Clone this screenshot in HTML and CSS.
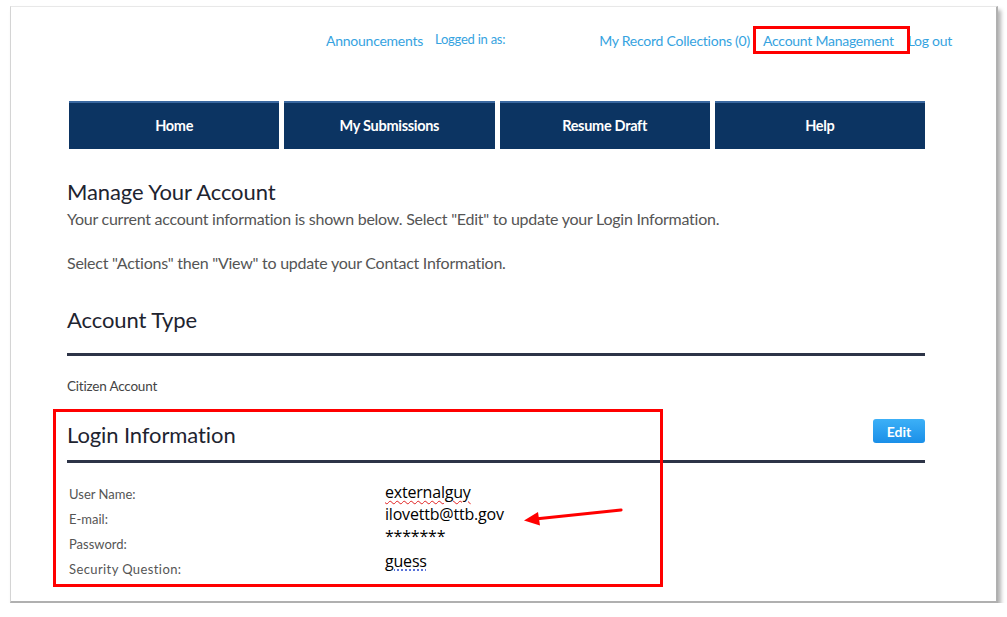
FILE: index.html
```html
<!DOCTYPE html>
<html lang="en">
<head>
<meta charset="UTF-8">
<meta name="viewport" content="width=device-width, initial-scale=1.0">
<title>Manage Your Account</title>
<link rel="stylesheet" href="styles.css">
</head>
<body>

<div class="frame">
    <div class="topbar">
        <a href="#" class="toplink announce">Announcements</a>
        <span class="toplink logged">Logged in as:</span>
        <a href="#" class="toplink records">My Record Collections (0)</a>
        <a href="#" class="toplink manage">Account Management</a>
        <a href="#" class="toplink logout">Log out</a>
        <div class="mark mark-top"></div>
    </div>

    <div class="content">
        <div class="nav">
            <a href="#">Home</a>
            <a href="#">My Submissions</a>
            <a href="#">Resume Draft</a>
            <a href="#">Help</a>
        </div>

        <h1 class="title">Manage Your Account</h1>
        <p class="intro">Your current account information is shown below. Select "Edit" to update your Login Information.</p>
        <p class="intro second">Select "Actions" then "View" to update your Contact Information.</p>

        <h2 class="section">Account Type</h2>
        <div class="rule"></div>
        <div class="small">Citizen Account</div>

        <div class="login">
            <div class="section-row">
                <h2 class="section">Login Information</h2>
                <button class="edit">Edit</button>
            </div>
            <div class="rule rule-login"></div>
            <div class="details">
                <div class="labels">
                    <div>User Name:</div>
                    <div>E-mail:</div>
                    <div>Password:</div>
                    <div>Security Question:</div>
                </div>
                <div class="values">
                    <div><span class="spell">externalguy</span></div>
                    <div>ilovettb@ttb.gov</div>
                    <div>*******</div>
                    <div class="last"><span class="grammar">guess</span></div>
                </div>
            </div>
            <div class="mark mark-login"></div>
            <svg class="arrow" width="110" height="24" viewBox="0 0 110 24">
                <line x1="100" y1="4" x2="14" y2="13" stroke="#ff0000" stroke-width="3.2" stroke-linecap="round"/>
                <polygon points="3,14.5 17,6 19,19.5" fill="#ff0000"/>
            </svg>
        </div>
    </div>
</div>

</body>
</html>
```

FILE: styles.css
```css
body {
    margin: 0;
    background-color: #fff;
    font-family: Lato, "Open Sans", sans-serif;
}
.frame {
    position: relative;
    width: 985px;
    height: 594px;
    margin: 6px 0 0 10px;
    background-color: #fff;
    border-left: 1px solid #d4d4d4;
    border-top: 1px solid #e8e8e8;
    border-right: 2px solid #b0b0b0;
    border-bottom: 2px solid #b0b0b0;
    box-shadow: 3px 4px 4px rgba(0, 0, 0, 0.3);
}

/* top links */
.topbar {
    position: relative;
    display: flex;
    align-items: center;
    height: 94px;
    padding-left: 315px;
    box-sizing: border-box;
    padding-bottom: 28px;
}
.toplink {
    color: #36a3df;
    font-size: 14px;
    text-decoration: none;
    letter-spacing: -0.25px;
}
.logged {
    margin-left: 12px;
    font-size: 13px;
    position: relative;
    top: -1px;
}
.records { margin-left: 94px; }
.manage { margin-left: 13px; }
.logout { margin-left: 14px; }

.mark {
    position: absolute;
    border: 3px solid #ff0000;
}
.mark-top {
    left: 742px;
    top: 19px;
    width: 151px;
    height: 22px;
}

/* main */
.content {
    width: 858px;
    margin-left: 56px;
}
.nav {
    display: flex;
    gap: 5px;
    margin-left: 2px;
}
.nav a {
    flex: 1;
    height: 48px;
    line-height: 45px;
    text-align: center;
    color: #fff;
    font-weight: bold;
    font-size: 14.5px;
    text-decoration: none;
    background-color: #0c3462;
    border-top: 2px solid #3a68a0;
    box-sizing: border-box;
    letter-spacing: -0.3px;
}
.title {
    margin: 29px 0 0;
    font-size: 22px;
    line-height: 28px;
    font-weight: normal;
    color: #1e2430;
    letter-spacing: -0.1px;
}
.intro {
    margin: 2px 0 0;
    font-size: 16px;
    line-height: 22px;
    color: #555;
    letter-spacing: -0.25px;
}
.intro.second { margin-top: 22px; }
.section {
    margin: 32px 0 0;
    font-size: 22px;
    line-height: 28px;
    font-weight: normal;
    color: #1e2430;
    letter-spacing: -0.1px;
}
.rule {
    height: 3px;
    margin-top: 19px;
    background-color: #2d3447;
}
.small {
    margin-top: 21px;
    font-size: 13.5px;
    line-height: 18px;
    color: #444;
    letter-spacing: -0.2px;
}

/* login information */
.login {
    position: relative;
}
.section-row {
    display: flex;
    justify-content: space-between;
    align-items: flex-start;
    height: 28px;
    margin-top: 26px;
}
.section-row .section { margin-top: 0; }
.edit {
    width: 52px;
    height: 24px;
    margin-top: -2px;
    padding: 0;
    border: none;
    border-radius: 3px;
    background: linear-gradient(#3cb0f7, #1a8fe8);
    color: #fff;
    font-family: Lato, sans-serif;
    font-weight: bold;
    font-size: 14px;
}
.rule-login { margin-top: 11px; }
.details {
    display: flex;
    margin-top: 19px;
    padding-left: 2px;
}
.labels {
    width: 316px;
    font-size: 13px;
    line-height: 25px;
    color: #555;
}
.labels div:last-child { letter-spacing: 0.4px; }
.values {
    margin-top: -1px;
    font-family: "Open Sans", sans-serif;
    font-size: 16px;
    line-height: 22px;
    color: #000;
    letter-spacing: -0.2px;
}
.values .last { margin-top: 3px; }
.spell {
    text-decoration: underline wavy #e02020;
    text-decoration-thickness: 1px;
    text-underline-offset: 2px;
}
.grammar {
    text-decoration: underline dotted #3050d0;
    text-underline-offset: 3px;
}
.mark-login {
    left: -14px;
    top: -12px;
    width: 604px;
    height: 172px;
}
.arrow {
    position: absolute;
    left: 454px;
    top: 85px;
}
```
